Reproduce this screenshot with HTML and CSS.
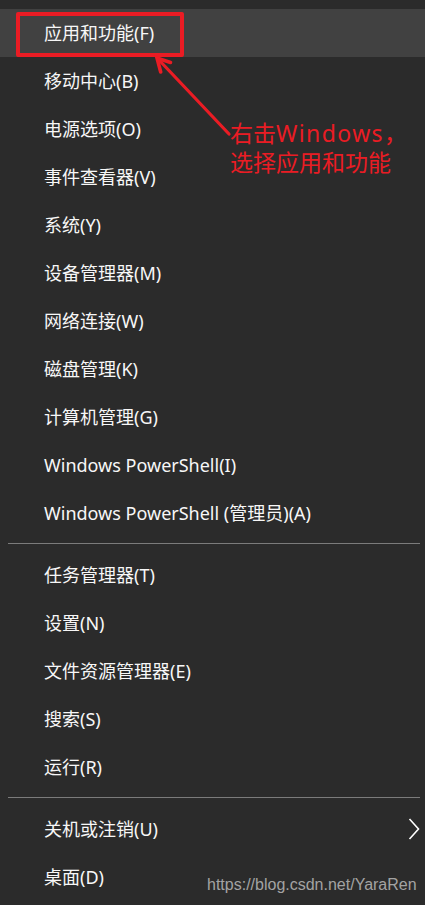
FILE: index.html
```html
<!DOCTYPE html>
<html lang="zh-CN">
<head>
<meta charset="utf-8">
<title>Win+X 菜单</title>
<link rel="stylesheet" href="styles.css">
</head>
<body>
<div class="page">
  <ul class="menu">
    <li class="item active">应用和功能(F)</li>
    <li class="item">移动中心(B)</li>
    <li class="item">电源选项(O)</li>
    <li class="item">事件查看器(V)</li>
    <li class="item">系统(Y)</li>
    <li class="item">设备管理器(M)</li>
    <li class="item">网络连接(W)</li>
    <li class="item">磁盘管理(K)</li>
    <li class="item">计算机管理(G)</li>
    <li class="item">Windows PowerShell(I)</li>
    <li class="item">Windows PowerShell (管理员)(A)</li>
    <li class="sep"><span class="sep-line"></span></li>
    <li class="item">任务管理器(T)</li>
    <li class="item">设置(N)</li>
    <li class="item">文件资源管理器(E)</li>
    <li class="item">搜索(S)</li>
    <li class="item">运行(R)</li>
    <li class="sep"><span class="sep-line"></span></li>
    <li class="item">关机或注销(U)
      <svg class="chevron" width="12" height="22" viewBox="0 0 12 22"><polyline points="1.5,1 10.5,11 1.5,21" fill="none" stroke="#ffffff" stroke-width="1.6"/></svg>
    </li>
    <li class="item">桌面(D)</li>
  </ul>

  <div class="highlight-box"></div>
  <svg class="arrow" width="425" height="905" viewBox="0 0 425 905">
    <line x1="229" y1="134" x2="159" y2="60" stroke="#ea1c24" stroke-width="3.2" stroke-linecap="round"/>
    <polyline points="160.7,72 157,58 170.5,62.5" fill="none" stroke="#ea1c24" stroke-width="3.6" stroke-linejoin="miter" stroke-linecap="round"/>
  </svg>
  <div class="note">
    <div class="note-line">右击<span class="note-latin">Windows</span>，</div>
    <div class="note-line">选择应用和功能</div>
  </div>
  <div class="watermark">https://blog.csdn.net/YaraRen</div>
</div>
</body>
</html>
```

FILE: styles.css
```css
html, body {
  margin: 0;
  padding: 0;
  background: #2b2b2b;
}

.page {
  position: relative;
  width: 425px;
  height: 905px;
  overflow: hidden;
  background: #2b2b2b;
  font-family: "Noto Sans", "Noto Sans CJK SC", sans-serif;
}

.menu {
  list-style: none;
  margin: 0;
  padding: 9px 0 0 0;
  display: flex;
  flex-direction: column;
}

.item {
  height: 48px;
  display: flex;
  align-items: center;
  padding-left: 44px;
  padding-right: 5px;
  font-size: 18px;
  line-height: 24px;
  color: #f7f7f7;
}

.item.active {
  background: #414141;
}

.chevron {
  margin-left: auto;
  display: block;
}

.sep {
  height: 14px;
  padding-top: 6px;
  box-sizing: border-box;
}

.sep-line {
  display: block;
  height: 1px;
  margin: 0 5px 0 8px;
  background: #7b7b7b;
}

.highlight-box {
  position: absolute;
  left: 16px;
  top: 12px;
  width: 168px;
  height: 45px;
  box-sizing: border-box;
  border: 4px solid #ea1c24;
  border-radius: 2px;
}

.arrow {
  position: absolute;
  left: 0;
  top: 0;
  pointer-events: none;
}

.note {
  position: absolute;
  left: 230px;
  top: 118px;
  display: flex;
  flex-direction: column;
  font-family: "Noto Sans CJK SC", sans-serif;
  font-size: 23px;
  color: #ea1c24;
}

.note-line {
  height: 28.5px;
  line-height: 28px;
  white-space: nowrap;
}

.note-latin {
  font-family: "Noto Sans", sans-serif;
  letter-spacing: 1.4px;
}

.watermark {
  position: absolute;
  left: 207px;
  top: 875px;
  font-family: "Liberation Sans", Arial, sans-serif;
  font-size: 16px;
  line-height: 20px;
  color: #a3a3a3;
}
```
